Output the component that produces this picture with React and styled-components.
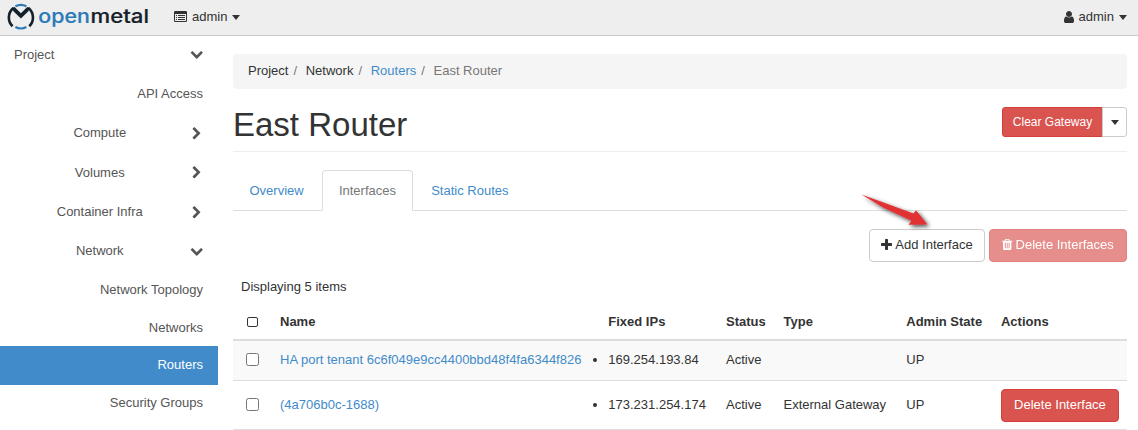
import React from "react";
import styled, { createGlobalStyle } from "styled-components";

const Global = createGlobalStyle`
  *, *::before, *::after { box-sizing: border-box; }
  body {
    margin: 0;
    background: #fff;
    color: #333;
    font: 13px/18.57px "Liberation Sans", Arial, sans-serif;
    overflow: hidden;
  }
  a { color: #428bca; text-decoration: none; }
`;

const icons = {
  plus: "M1600 736v192q0 40-28 68t-68 28h-416v416q0 40-28 68t-68 28h-192q-40 0-68-28t-28-68v-416h-416q-40 0-68-28t-28-68v-192q0-40 28-68t68-28h416v-416q0-40 28-68t68-28h192q40 0 68 28t28 68v416h416q40 0 68 28t28 68z",
  trash: "M704 1376v-704q0-14-9-23t-23-9h-64q-14 0-23 9t-9 23v704q0 14 9 23t23 9h64q14 0 23-9t9-23zm256 0v-704q0-14-9-23t-23-9h-64q-14 0-23 9t-9 23v704q0 14 9 23t23 9h64q14 0 23-9t9-23zm256 0v-704q0-14-9-23t-23-9h-64q-14 0-23 9t-9 23v704q0 14 9 23t23 9h64q14 0 23-9t9-23zm-544-992h448l-48-117q-7-9-17-11h-317q-10 2-17 11zm928 32v64q0 14-9 23t-23 9h-96v948q0 83-47 143.5t-113 60.5h-832q-66 0-113-58.5t-47-141.5v-952h-96q-14 0-23-9t-9-23v-64q0-14 9-23t23-9h309l70-167q15-37 54-63t79-26h320q40 0 79 26t54 63l70 167h309q14 0 23 9t9 23z",
  user: "M1536 1399q0 109-62.5 187t-150.5 78h-854q-88 0-150.5-78t-62.5-187q0-85 8.5-160.5t31.5-152 58.5-131 94-89 134.5-34.5q131 128 313 128t313-128q76 0 134.5 34.5t94 89 58.5 131 31.5 152 8.5 160.5zm-256-887q0 159-112.5 271.5t-271.5 112.5-271.5-112.5-112.5-271.5 112.5-271.5 271.5-112.5 271.5 112.5 112.5 271.5z",
  down: "M1683 808l-742 741q-19 19-45 19t-45-19l-742-741q-19-19-19-45.5t19-45.5l166-165q19-19 45-19t45 19l531 531 531-531q19-19 45-19t45 19l166 165q19 19 19 45.5t-19 45.5z",
  right: "M1363 877l-742 742q-19 19-45 19t-45-19l-166-166q-19-19-19-45t19-45l531-531-531-531q-19-19-19-45t19-45l166-166q19-19 45-19t45 19l742 742q19 19 19 45t-19 45z",
};

const Glyph = styled.svg`
  display: block;
  flex: none;
  width: ${(p) => p.$w || 13}px;
  height: ${(p) => p.$s || 13}px;
  fill: currentColor;
`;
const Icon = ({ name, w, s, box = "0 0 1792 1792" }) => (
  <Glyph $w={w} $s={s} viewBox={box} aria-hidden="true">
    <path d={icons[name]} />
  </Glyph>
);

const Navbar = styled.header`
  display: flex;
  align-items: center;
  height: 36px;
  padding: 0 11px 2px 7px;
  background: #eee;
  border-bottom: 1px solid #c9c9c9;
`;
const LogoArt = styled.svg`
  display: block;
  width: 144px;
  height: 33px;
`;
const NavMenu = styled.div`
  display: flex;
  align-items: center;
  padding-top: 1px;
  margin-left: ${(p) => (p.$end ? "auto" : "23px")};
  svg { margin-top: -1px; }
`;
const NavLabel = styled.span`
  margin: 0 5px 0 ${(p) => p.$gap}px;
`;
const Caret = styled.span`
  width: 0;
  height: 0;
  border: 4px solid transparent;
  border-top: 5px solid currentColor;
  border-bottom: 0;
`;

const Logo = () => (
  <LogoArt viewBox="0 0 144 33" role="img" aria-label="openmetal">
    <g fill="none" strokeWidth="2.2">
      <path d="M8.4 6.3Q13.9 3.3 19.4 6.3M8.4 27Q13.9 30 19.4 27" stroke="#2a7ab9" />
      <path d="M6.3 8C.4 13.2.6 21.4 5.5 26.2M21.5 8C27.4 13.2 27.2 21.4 22.3 26.2" stroke="#14212b" strokeWidth="2.6" />
    </g>
    <path d="M5.2 7.8L7.6 7L13.9 13.2L20.2 7L22.6 7.8L21.4 11.2L13.9 18.6L6.4 11.2Z" fill="#14212b" />
    <g fontFamily="Inter, sans-serif" fontSize="18.7" fontWeight="500">
      <text x="31.3" y="22.8" fill="#2a7ab9" stroke="#2a7ab9" strokeWidth=".2" textLength="51.5" lengthAdjust="spacingAndGlyphs">open</text>
      <text x="83.5" y="22.8" fill="#14212b" stroke="#14212b" strokeWidth=".2" textLength="58.5" lengthAdjust="spacingAndGlyphs">metal</text>
    </g>
  </LogoArt>
);

const ListIcon = () => (
  <Glyph viewBox="0 0 13 13" aria-hidden="true">
    <path fillRule="evenodd" d="M1.2 1h10.6q1.2 0 1.2 1.2v8.6q0 1.2-1.2 1.2H1.2Q0 12 0 10.8V2.2Q0 1 1.2 1zM1 4v6.6q0 .4.4.4h10.2q.4 0 .4-.4V4z" />
    <path d="M2 5h1v1H2zM4 5h7v1H4zM2 7h1v1H2zM4 7h7v1H4zM2 9h1v1H2zM4 9h7v1H4z" />
  </Glyph>
);

const Body = styled.div`
  display: flex;
  align-items: flex-start;
`;
const Sidebar = styled.nav`
  flex: none;
  width: 218px;
`;
const SideItem = styled.a`
  && { color: ${(p) => (p.$active ? "#fff" : "#555")}; }
  display: flex;
  align-items: center;
  height: ${(p) => p.$h}px;
  padding: 0 15px 0 14px;
  background: ${(p) => (p.$active ? "#428bca" : "transparent")};
  svg { margin: ${(p) => (p.$open ? "-2.5px" : "-0.5px")} 0 0 4px; }
`;
const SideLabel = styled.span`
  flex: 1;
  text-align: ${(p) => p.$align};
`;

const Main = styled.main`
  width: 894px;
  margin: 18px 0 0 15px;
`;
const Breadcrumb = styled.ol`
  display: flex;
  align-items: center;
  height: 35px;
  margin: 0;
  padding: 0 15px 1px;
  list-style: none;
  background: #f5f5f5;
  border-radius: 4px;
`;
const Crumb = styled.li`
  color: ${(p) => (p.$muted ? "#777" : "#333")};
  &:not(:first-child)::before {
    content: "/";
    padding: 0 8.65px 0 5px;
    color: #777;
  }
`;
const PageHeader = styled.div`
  display: flex;
  justify-content: space-between;
  align-items: flex-start;
  height: 63px;
  padding-top: 18px;
  border-bottom: 1px solid #eee;
`;
const Title = styled.h1`
  margin: -1px 0 0;
  font-size: 33px;
  font-weight: 400;
  line-height: 37px;
`;
const ButtonGroup = styled.div`
  display: flex;
`;
const Button = styled.button`
  display: flex;
  align-items: center;
  justify-content: center;
  gap: 3px;
  width: ${(p) => (p.$w ? p.$w + "px" : "auto")};
  height: ${(p) => (p.$small ? 30 : 33)}px;
  padding: 0 ${(p) => (p.$small ? 10 : 11)}px ${(p) => (p.$small ? 1 : 2)}px;
  border: 1px solid ${(p) => (p.$danger ? "#d43f3a" : "#ccc")};
  border-radius: ${(p) => (p.$small ? 3 : 4)}px;
  background: ${(p) => (p.$danger ? "#d9534f" : "#fff")};
  color: ${(p) => (p.$danger ? "#fff" : "#333")};
  font: ${(p) => (p.$small ? 12 : 13)}px "Liberation Sans", Arial, sans-serif;
  white-space: nowrap;
  opacity: ${(p) => (p.disabled ? 0.65 : 1)};
`;
const SplitMain = styled(Button)`
  border-radius: 3px 0 0 3px;
`;
const SplitToggle = styled(Button)`
  margin-left: -1px;
  padding: 0;
  border-radius: 0 3px 3px 0;
`;
const Tabs = styled.div`
  display: flex;
  gap: 2px;
  height: 41px;
  margin-top: 18px;
  border-bottom: 1px solid #ddd;
`;
const Tab = styled.a`
  height: 41px;
  padding: 11px 15.5px 0;
  border: 1px solid transparent;
  border-radius: 4px 4px 0 0;
  ${(p) => p.$active && "&& { padding: 11px 15.7px 0; color: #777; background: #fff; border-color: #ddd #ddd #fff; }"}
`;
const Actions = styled.div`
  position: relative;
  display: flex;
  justify-content: flex-end;
  gap: 4px;
  margin-top: 18px;
`;
const Pointer = styled.svg`
  position: absolute;
  right: 186px;
  top: -42px;
  width: 90px;
  height: 50px;
`;
const Count = styled.div`
  height: 40px;
  padding: 16px 8px 0;
`;
const Table = styled.table`
  width: 894px;
  table-layout: fixed;
  border-collapse: separate;
  border-spacing: 0;
`;
const Th = styled.th`
  height: 39px;
  width: ${(p) => p.$w}px;
  padding: ${(p) => (p.$pick ? "2px 8px 0 14px" : "4px 8px 0")};
  border-bottom: 2px solid #ddd;
  text-align: left;
  vertical-align: middle;
  white-space: nowrap;
`;
const Row = styled.tr`
  height: ${(p) => p.$h}px;
  background: ${(p) => (p.$striped ? "#f9f9f9" : "#fff")};
`;
const Td = styled.td`
  padding: 0 8px ${(p) => (p.$up || 0)}px;
  border-bottom: 1px solid #ddd;
  vertical-align: middle;
  white-space: nowrap;
`;
const Check = styled.input`
  display: block;
  width: 13px;
  height: 13px;
  margin: 0 0 0 5px;
`;
const SelectAll = styled.span`
  display: block;
  width: 11px;
  height: 10px;
  border: 1px solid #333;
  border-radius: 2px;
`;
const IpList = styled.ul`
  margin: 0;
  padding: 0;
`;

const nav = [
  ["Project", 38, "left", "down"],
  ["API Access", 40, "right"],
  ["Compute", 39, "center", "right"],
  ["Volumes", 40, "center", "right"],
  ["Container Infra", 39, "center", "right"],
  ["Network", 39, "center", "down"],
  ["Network Topology", 38.8, "right"],
  ["Networks", 36.2, "right"],
  ["Routers", 39, "right"],
  ["Security Groups", 37, "right"],
];
const columns = [
  ["Name", 328.3],
  ["Fixed IPs", 117.7],
  ["Status", 57.5],
  ["Type", 122.8],
  ["Admin State", 94.7],
  ["Actions", 134],
];
const ports = [
  { name: "HA port tenant 6c6f049e9cc4400bbd48f4fa6344f826", ip: "169.254.193.84", type: "", h: 40 },
  { name: "(4a706b0c-1688)", ip: "173.231.254.174", type: "External Gateway", h: 49, removable: true },
];

export default function App() {
  return (
    <>
      <Global />
      <Navbar>
        <Logo />
        <NavMenu>
          <ListIcon />
          <NavLabel $gap={5}>admin</NavLabel>
          <Caret />
        </NavMenu>
        <NavMenu $end>
          <Icon name="user" w={10} s={14} box="256 0 1280 1792" />
          <NavLabel $gap={5}>admin</NavLabel>
          <Caret />
        </NavMenu>
      </Navbar>
      <Body>
        <Sidebar>
          {nav.map(([label, h, align, chevron]) => (
            <SideItem key={label} $h={h} $open={chevron === "down"} $active={label === "Routers"}>
              <SideLabel $align={align}>{label}</SideLabel>
              {chevron && <Icon name={chevron} s={13.5} w={13.5} />}
            </SideItem>
          ))}
        </Sidebar>
        <Main>
          <Breadcrumb>
            <Crumb>Project</Crumb>
            <Crumb>Network</Crumb>
            <Crumb><a>Routers</a></Crumb>
            <Crumb $muted>East Router</Crumb>
          </Breadcrumb>
          <PageHeader>
            <Title>East Router</Title>
            <ButtonGroup>
              <SplitMain $small $danger $w={101}>Clear Gateway</SplitMain>
              <SplitToggle $small $w={25} aria-label="More actions"><Caret /></SplitToggle>
            </ButtonGroup>
          </PageHeader>
          <Tabs>
            <Tab>Overview</Tab>
            <Tab $active>Interfaces</Tab>
            <Tab>Static Routes</Tab>
          </Tabs>
          <Actions>
            <Button $w={116}><Icon name="plus" w={11} s={14} box="192 0 1408 1792" />Add Interface</Button>
            <Button $danger disabled $w={138}><Icon name="trash" w={10.4} s={13} box="192 0 1408 1792" />Delete Interfaces</Button>
            <Pointer viewBox="0 0 90 50" aria-hidden="true">
              <defs>
                <filter id="shade" x="-20%" y="-20%" width="150%" height="160%">
                  <feDropShadow dx="2" dy="2" stdDeviation="2" floodColor="#000" floodOpacity=".7" />
                </filter>
              </defs>
              <path d="M10.500 7.500L62.500 26.500L65 23.200L76.500 37.600L57.500 37.800L60.500 33.800L32 20.500Z" fill="#e03131" filter="url(#shade)" />
            </Pointer>
          </Actions>
          <Count>Displaying 5 items</Count>
          <Table>
            <thead>
              <tr>
                <Th $w={39} $pick><SelectAll /></Th>
                {columns.map(([label, w]) => <Th key={label} $w={w}>{label}</Th>)}
              </tr>
            </thead>
            <tbody>
              {ports.map((p, i) => (
                <Row key={p.name} $h={p.h} $striped={i % 2 === 0}>
                  <Td $up={2}><Check type="checkbox" /></Td>
                  <Td><a>{p.name}</a></Td>
                  <Td><IpList><li>{p.ip}</li></IpList></Td>
                  <Td>Active</Td>
                  <Td>{p.type}</Td>
                  <Td>UP</Td>
                  <Td>{p.removable && <Button $danger $w={118}>Delete Interface</Button>}</Td>
                </Row>
              ))}
            </tbody>
          </Table>
        </Main>
      </Body>
    </>
  );
}
